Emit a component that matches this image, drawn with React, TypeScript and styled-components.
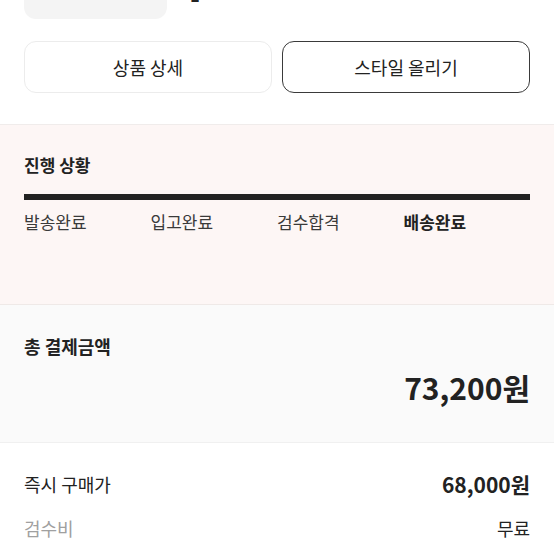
import React from 'react';
import styled, { createGlobalStyle } from 'styled-components';

const GlobalStyle = createGlobalStyle`
  html, body {
    margin: 0;
    padding: 0;
    background: #fff;
  }
  body {
    font-family: "Noto Sans CJK KR", "Noto Sans", sans-serif;
    color: #222;
    overflow: hidden;
  }
`;

const Page = styled.div`
  width: 554px;
`;

const ProductHeader = styled.div`
  display: flex;
  gap: 23px;
  padding: 0 24px;
  margin-top: -124px;
`;

const Thumbnail = styled.div`
  width: 143px;
  height: 143px;
  border-radius: 12px;
  background: #f4f4f4;
  flex-shrink: 0;
`;

const ProductInfo = styled.div`
  display: flex;
  flex-direction: column;
  justify-content: flex-end;
  padding-bottom: 14px;
`;

const SizeText = styled.span`
  font-size: 16px;
  font-weight: 600;
  line-height: 20px;
  color: #222;
`;

const ButtonRow = styled.div`
  display: grid;
  grid-template-columns: 1fr 1fr;
  gap: 10px;
  padding: 22px 24px 31px;
`;

const ActionButton = styled.button<{ $outlined?: boolean }>`
  height: 52px;
  border-radius: 12px;
  background: #fff;
  border: ${(p) => (p.$outlined ? '1.5px solid #3a3a3a' : '1px solid #ececec')};
  font-family: inherit;
  font-size: 18px;
  color: #222;
  cursor: pointer;
`;

const Section = styled.section<{ $bg: string }>`
  background: ${(p) => p.$bg};
  border-top: 1px solid #f0eceb;
  padding: 0 24px;
`;

const ProgressSection = styled(Section)`
  padding-top: 27px;
  height: 152px;
`;

const SectionTitle = styled.h3<{ $large?: boolean }>`
  margin: 0;
  font-size: ${(p) => (p.$large ? '18px' : '17px')};
  font-weight: 700;
  line-height: 26px;
  color: #222;
`;

const ProgressBar = styled.div`
  height: 6px;
  background: #222;
  margin-top: 16px;
`;

const StepList = styled.div`
  display: grid;
  grid-template-columns: repeat(4, 1fr);
  margin-top: 10px;
`;

const Step = styled.span<{ $active?: boolean }>`
  font-size: 17px;
  line-height: 24px;
  font-weight: ${(p) => (p.$active ? 700 : 400)};
  color: ${(p) => (p.$active ? '#222' : '#3a3a3a')};
`;

const TotalSection = styled(Section)`
  padding-top: 28px;
  height: 109px;
  border-top-color: #efe9e7;
`;

const TotalAmount = styled.div`
  text-align: right;
  font-size: 30px;
  font-weight: 700;
  line-height: 38px;
  margin-top: 9px;
  color: #222;
`;

const PriceList = styled(Section)`
  padding-top: 19px;
  border-top-color: #f0f0f0;
`;

const PriceRow = styled.div`
  display: flex;
  justify-content: space-between;
  align-items: center;
  height: 44px;
`;

const PriceLabel = styled.span<{ $muted?: boolean }>`
  font-size: 18px;
  color: ${(p) => (p.$muted ? '#a0a0a0' : '#222')};
`;

const PriceValue = styled.span<{ $bold?: boolean }>`
  font-size: ${(p) => (p.$bold ? '21px' : '18px')};
  font-weight: ${(p) => (p.$bold ? 700 : 400)};
  color: #222;
`;

const steps = ['발송완료', '입고완료', '검수합격', '배송완료'];

const App: React.FC = () => {
  return (
    <Page>
      <GlobalStyle />
      <ProductHeader>
        <Thumbnail />
        <ProductInfo>
          <SizeText>L</SizeText>
        </ProductInfo>
      </ProductHeader>
      <ButtonRow>
        <ActionButton>상품 상세</ActionButton>
        <ActionButton $outlined>스타일 올리기</ActionButton>
      </ButtonRow>
      <ProgressSection $bg="#fdf6f5">
        <SectionTitle>진행 상황</SectionTitle>
        <ProgressBar />
        <StepList>
          {steps.map((s, i) => (
            <Step key={s} $active={i === steps.length - 1}>
              {s}
            </Step>
          ))}
        </StepList>
      </ProgressSection>
      <TotalSection $bg="#fafafa">
        <SectionTitle $large>총 결제금액</SectionTitle>
        <TotalAmount>73,200원</TotalAmount>
      </TotalSection>
      <PriceList $bg="#fff">
        <PriceRow>
          <PriceLabel>즉시 구매가</PriceLabel>
          <PriceValue $bold>68,000원</PriceValue>
        </PriceRow>
        <PriceRow>
          <PriceLabel $muted>검수비</PriceLabel>
          <PriceValue>무료</PriceValue>
        </PriceRow>
      </PriceList>
    </Page>
  );
};

export default App;
